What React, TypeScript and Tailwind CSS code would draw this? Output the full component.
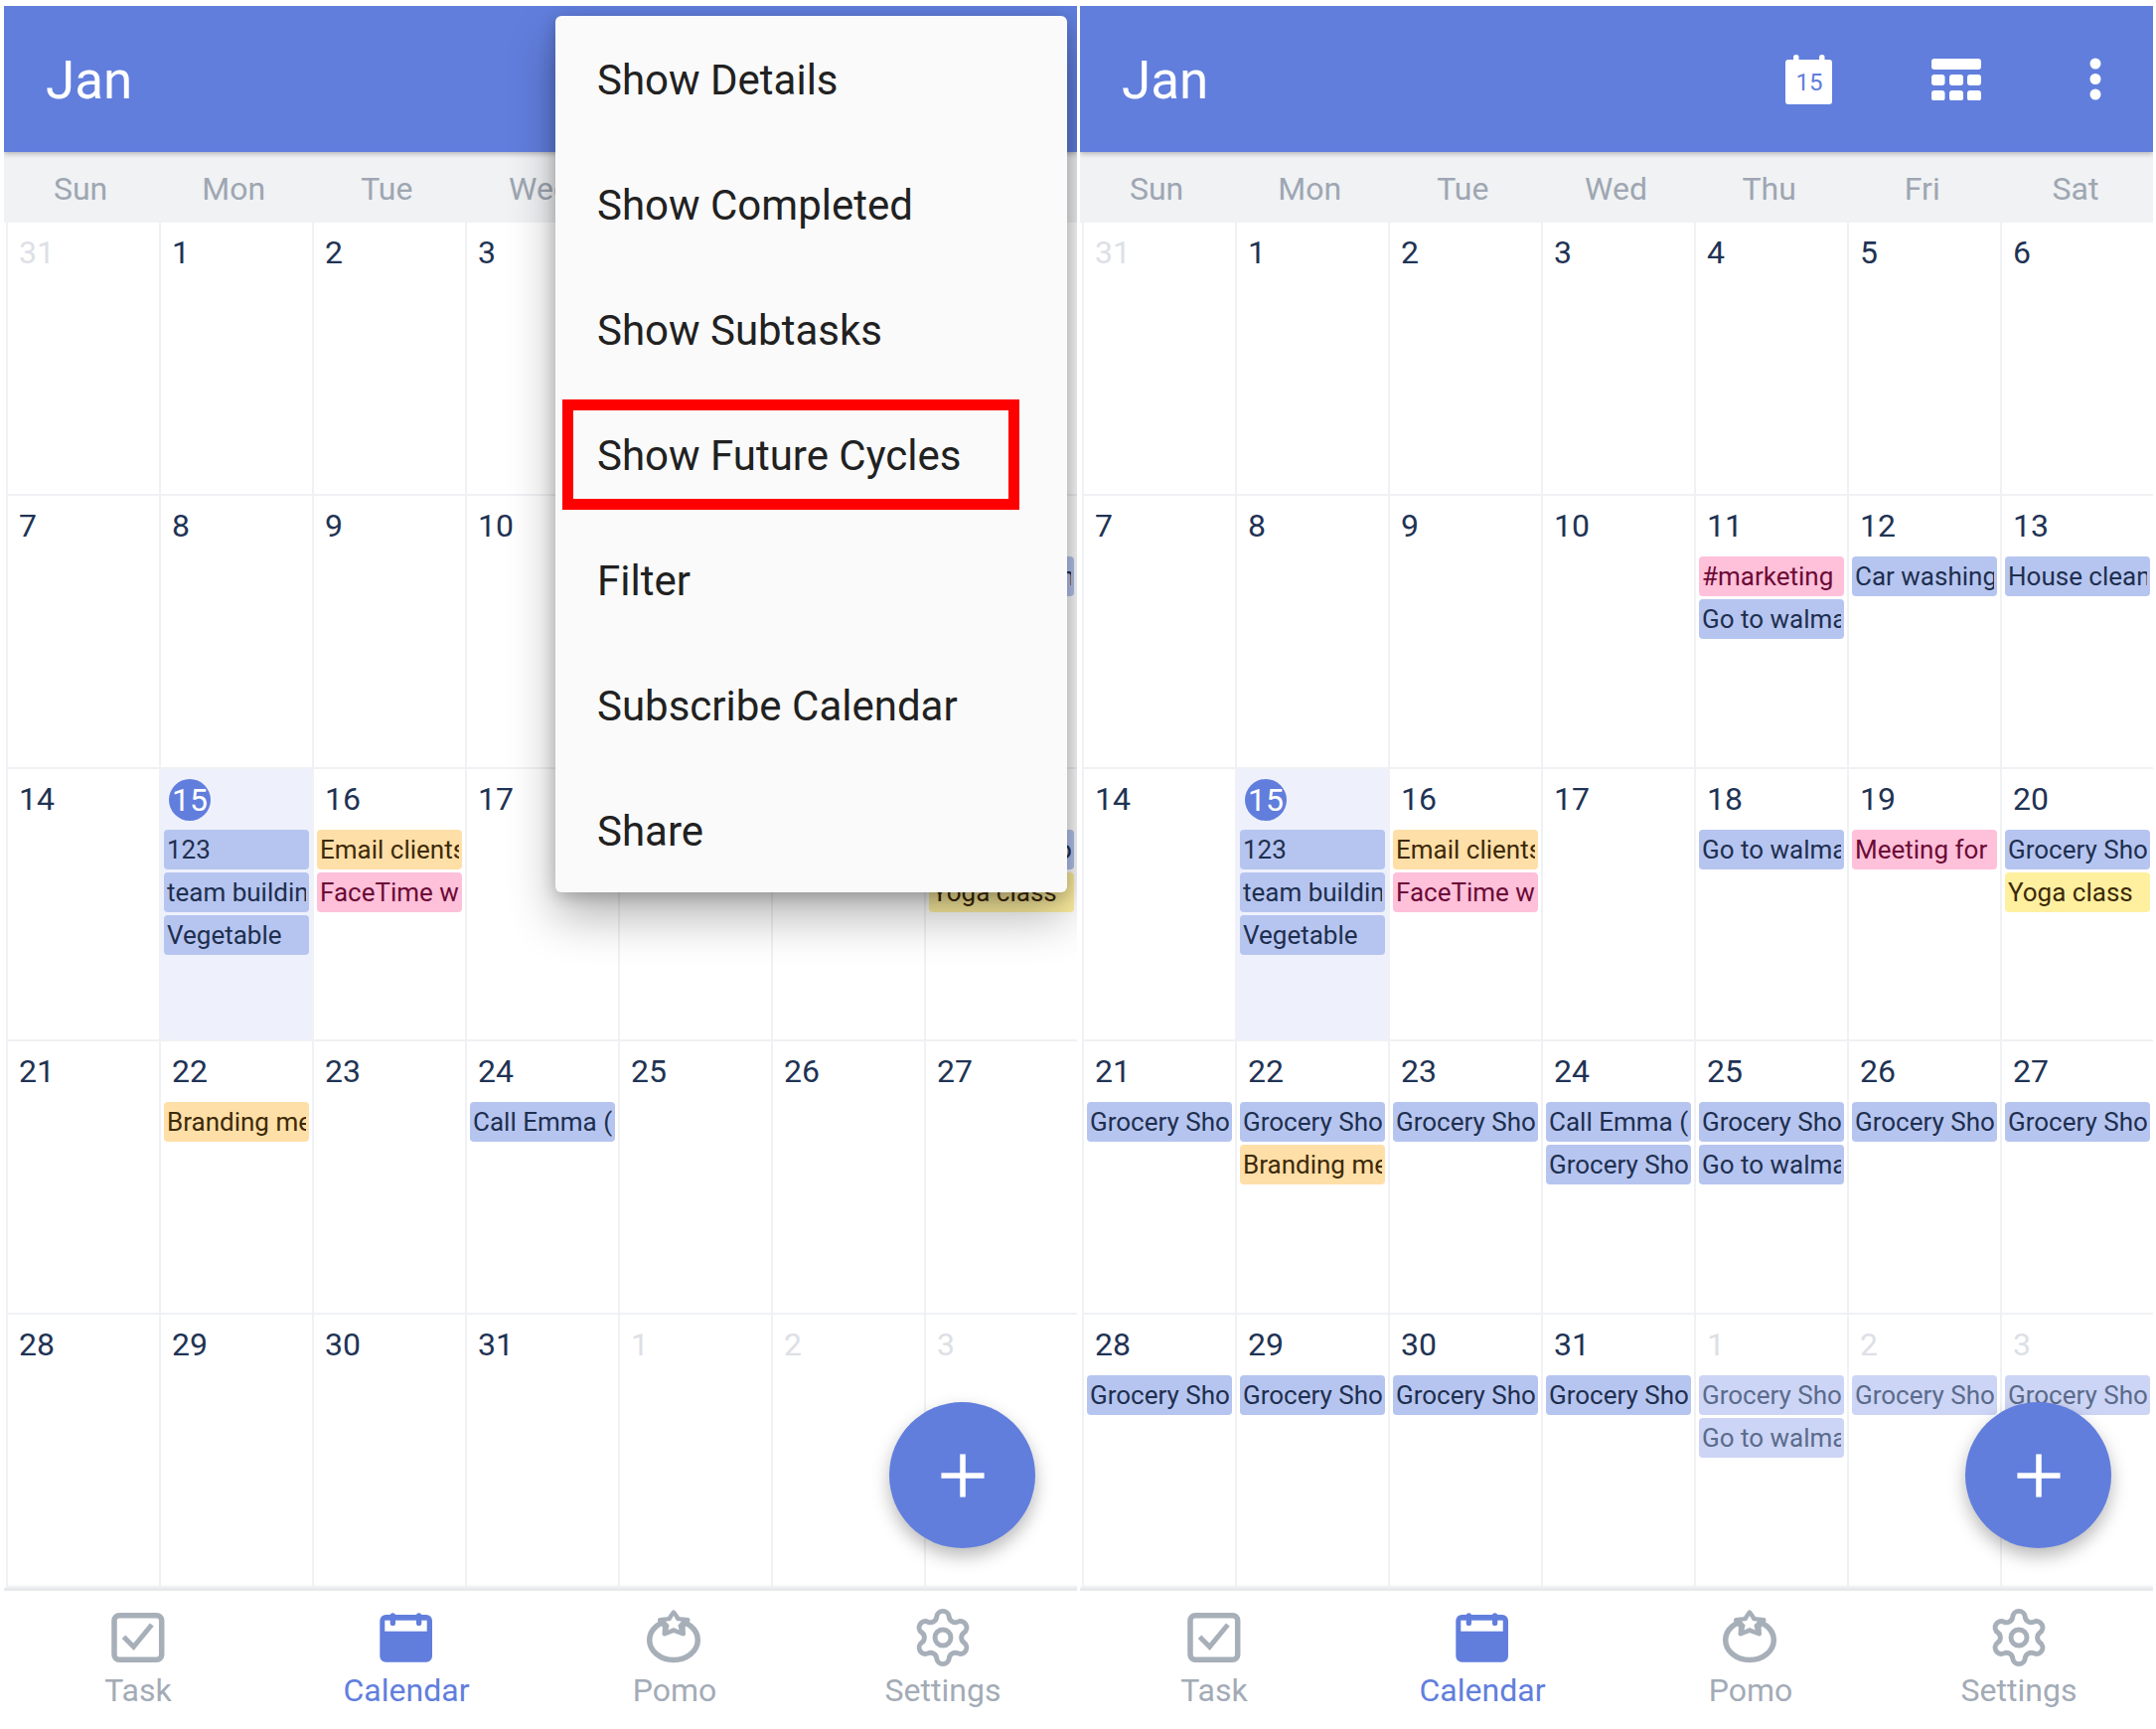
import { Plus, Settings } from "lucide-react";
import { clsx } from "clsx";

type Tone = "blue" | "orange" | "pink" | "yellow";
type CalEvent = { title: string; tone: Tone };
type EventMap = Record<string, CalEvent[]>;

const WEEKDAYS = ["Sun", "Mon", "Tue", "Wed", "Thu", "Fri", "Sat"];
const MENU_ITEMS = [
  "Show Details",
  "Show Completed",
  "Show Subtasks",
  "Show Future Cycles",
  "Filter",
  "Subscribe Calendar",
  "Share",
];

// key is "month-day", the grid starts on Dec 31 and ends on Feb 3
const CELLS: { key: string; day: number; muted: boolean }[] = [
  { key: "dec-31", day: 31, muted: true },
  ...Array.from({ length: 31 }, (_, i) => ({ key: `jan-${i + 1}`, day: i + 1, muted: false })),
  ...[1, 2, 3].map((d) => ({ key: `feb-${d}`, day: d, muted: true })),
];

const TONES: Record<Tone, string> = {
  blue: "bg-[#b6c5f0] text-[#1e2f4f]",
  orange: "bg-[#ffdfa8] text-[#3d2a08]",
  pink: "bg-[#ffc0da] text-[#6b0a35]",
  yellow: "bg-[#fff0a0] text-[#3d2a08]",
};

const grocery: CalEvent = { title: "Grocery Shopping", tone: "blue" };
const walmart: CalEvent = { title: "Go to walmart", tone: "blue" };
const branding: CalEvent = { title: "Branding meeting", tone: "orange" };
const callEmma: CalEvent = { title: "Call Emma (Work)", tone: "blue" };
const yoga: CalEvent = { title: "Yoga class", tone: "yellow" };

const sharedEvents: EventMap = {
  "jan-15": [
    { title: "123", tone: "blue" },
    { title: "team building", tone: "blue" },
    { title: "Vegetable", tone: "blue" },
  ],
  "jan-16": [
    { title: "Email clients", tone: "orange" },
    { title: "FaceTime with Mom", tone: "pink" },
  ],
};

const leftEvents: EventMap = {
  ...sharedEvents,
  "jan-13": [{ title: "House cleaning", tone: "blue" }],
  "jan-20": [grocery, yoga],
  "jan-22": [branding],
  "jan-24": [callEmma],
};

const rightEvents: EventMap = {
  ...sharedEvents,
  "jan-11": [{ title: "#marketing", tone: "pink" }, walmart],
  "jan-12": [{ title: "Car washing", tone: "blue" }],
  "jan-13": [{ title: "House cleaning", tone: "blue" }],
  "jan-18": [walmart],
  "jan-19": [{ title: "Meeting for lunch", tone: "pink" }],
  "jan-20": [grocery, yoga],
  "jan-21": [grocery],
  "jan-22": [grocery, branding],
  "jan-23": [grocery],
  "jan-24": [callEmma, grocery],
  "jan-25": [grocery, walmart],
  "jan-26": [grocery],
  "jan-27": [grocery],
  "jan-28": [grocery],
  "jan-29": [grocery],
  "jan-30": [grocery],
  "jan-31": [grocery],
  "feb-1": [grocery, walmart],
  "feb-2": [grocery],
  "feb-3": [grocery],
};

function TodayIcon() {
  return (
    <svg width="47" height="50" viewBox="0 0 47 50">
      <rect x="0" y="5" width="47" height="45" rx="3" fill="#fff" />
      <rect x="8" y="0" width="5.5" height="10" rx="2.5" fill="#fff" />
      <rect x="34" y="0" width="5.5" height="10" rx="2.5" fill="#fff" />
      <text x="24" y="36" textAnchor="middle" fontSize="24" fontFamily="Roboto, sans-serif" fill="#617edd">
        15
      </text>
    </svg>
  );
}

function MonthGridIcon() {
  return (
    <svg width="50" height="42" viewBox="0 0 50 42" fill="#fff">
      <rect x="0" y="0" width="50" height="11" rx="3" />
      <rect x="0" y="16" width="13.5" height="11" rx="3" />
      <rect x="18" y="16" width="14" height="11" rx="3" />
      <rect x="36" y="16" width="14" height="11" rx="3" />
      <rect x="0" y="32" width="13.5" height="10.5" rx="3" />
      <rect x="18" y="32" width="14" height="10.5" rx="3" />
      <rect x="36" y="32" width="14" height="10.5" rx="3" />
    </svg>
  );
}

function MoreIcon() {
  return (
    <svg width="12" height="44" viewBox="0 0 12 44" fill="#fff">
      <circle cx="6" cy="6" r="5.5" />
      <circle cx="6" cy="21.5" r="5.5" />
      <circle cx="6" cy="37" r="5.5" />
    </svg>
  );
}

function TaskIcon() {
  return (
    <svg width="60" height="60" viewBox="0 0 60 60" fill="none" stroke="#a7afb9">
      <rect x="6" y="7.8" width="47.7" height="44.4" rx="5" strokeWidth="5.5" />
      <path d="M15.5 29.3 L25.5 39.3 L43.8 17" strokeWidth="5" />
    </svg>
  );
}

function CalendarIcon() {
  return (
    <svg width="60" height="60" viewBox="0 0 60 60">
      <rect x="3.3" y="7" width="52.7" height="47.7" rx="6" fill="#617edd" />
      <rect x="8.3" y="12.7" width="42.4" height="11" fill="#fff" />
      <rect x="13.7" y="5.3" width="5.3" height="12.7" rx="2.6" fill="#617edd" />
      <rect x="40" y="5.3" width="5.3" height="12.7" rx="2.6" fill="#617edd" />
    </svg>
  );
}

function PomoIcon() {
  return (
    <svg width="60" height="60" viewBox="0 0 60 60" fill="none" stroke="#a7afb9" strokeLinejoin="round">
      <ellipse cx="29" cy="32.5" rx="24.3" ry="20" strokeWidth="5.5" />
      <path
        d="M29 5 L33.5 11.5 L43 12.5 L38 19 L38.5 26 L29 22.5 L20 26 L20.5 19 L15.5 12.5 L24.5 11.5 Z"
        fill="#a7afb9"
        strokeWidth="5"
      />
      <path
        d="M29 8 L32 13 L37 13.7 L33.4 17.6 L34.6 22.6 L29 20 L23.4 22.6 L24.6 17.6 L21 13.7 L26 13 Z"
        fill="#fff"
        stroke="none"
      />
    </svg>
  );
}

function BottomNav() {
  const items = [
    { label: "Task", icon: <TaskIcon /> },
    { label: "Calendar", icon: <CalendarIcon />, active: true },
    { label: "Pomo", icon: <PomoIcon /> },
    { label: "Settings", icon: <Settings size={64} strokeWidth={1.85} color="#a7afb9" className="-my-[2px]" /> },
  ];

  return (
    <nav className="flex h-[142px] border-t-[3px] border-[#e8e9eb] bg-white shadow-[0_-2px_4px_rgba(0,0,0,0.04)]">
      {items.map((item) => (
        <div key={item.label} className="flex flex-1 flex-col items-center pt-[17px]">
          <div className="flex h-[60px] items-center justify-center">{item.icon}</div>
          <span
            className={clsx(
              "mt-[4px] text-[32px] leading-[38px]",
              item.active ? "text-[#617edd]" : "text-[#a3abb6]"
            )}
          >
            {item.label}
          </span>
        </div>
      ))}
    </nav>
  );
}

function EventChip({ event, muted }: { event: CalEvent; muted: boolean }) {
  return (
    <div
      className={clsx(
        "mb-[3px] h-[40px] rounded-[4px] px-[3px] text-[26px] leading-[40px]",
        muted ? "bg-[#ccd5f5] text-[#5b6b8c]" : TONES[event.tone]
      )}
    >
      <div className="overflow-hidden whitespace-nowrap">{event.title}</div>
    </div>
  );
}

function DayCell({
  day,
  muted,
  today,
  events,
}: {
  day: number;
  muted: boolean;
  today: boolean;
  events: CalEvent[];
}) {
  return (
    <div
      className={clsx(
        "border-b-2 border-l-2 border-[#f0f1f4] bg-clip-padding px-[3px]",
        today && "bg-[#eef1fc]"
      )}
    >
      <div className="flex h-[61px] items-center pb-[1px] text-[32px]">
        {today ? (
          <span className="ml-[5px] mt-[3px] flex h-[42px] w-[42px] items-center justify-center rounded-full bg-[#617edd] text-white">
            {day}
          </span>
        ) : (
          <span className={clsx("ml-[8px]", muted ? "text-[#dde0e6]" : "text-[#1f3354]")}>{day}</span>
        )}
      </div>
      {events.map((event) => (
        <EventChip key={event.title} event={event} muted={muted} />
      ))}
    </div>
  );
}

function Phone({ events, showMenu }: { events: EventMap; showMenu?: boolean }) {
  return (
    <div className="relative h-[1734px] w-[1080px] overflow-hidden bg-white">
      <header className="relative z-10 flex h-[147px] items-center bg-[#617edd] pl-[42px] pr-[52px] text-white shadow-[0_2px_5px_rgba(0,0,0,0.25)]">
        <h1 className="flex-1 pt-[4px] text-[53px] font-normal">Jan</h1>
        <div className="flex items-center">
          <TodayIcon />
          <div className="ml-[100px]">
            <MonthGridIcon />
          </div>
          <div className="ml-[109px]">
            <MoreIcon />
          </div>
        </div>
      </header>

      <div className="grid h-[71px] grid-cols-7 items-center bg-[#f0f2f4] pr-[1px] pt-[2px] text-center text-[32px] text-[#9ea6b2]">
        {WEEKDAYS.map((name) => (
          <span key={name}>{name}</span>
        ))}
      </div>

      <div className="grid h-[1374px] grid-cols-[repeat(7,154px)] grid-rows-5 pl-[2px]">
        {CELLS.map((cell) => (
          <DayCell
            key={cell.key}
            day={cell.day}
            muted={cell.muted}
            today={cell.key === "jan-15"}
            events={events[cell.key] ?? []}
          />
        ))}
      </div>

      <BottomNav />

      <button
        type="button"
        className="absolute bottom-[182px] right-[42px] z-10 flex h-[147px] w-[147px] items-center justify-center rounded-full bg-[#617edd] text-white shadow-[0_8px_18px_rgba(0,0,0,0.28)]"
      >
        <Plus size={74} strokeWidth={1.8} strokeLinecap="butt" />
      </button>

      {showMenu && (
        <>
          <div className="absolute left-[555px] top-[10px] z-20 w-[515px] rounded-[6px] bg-[#fafafa] shadow-[0_24px_48px_rgba(0,0,0,0.3),0_4px_16px_rgba(0,0,0,0.2)]">
            {MENU_ITEMS.map((item) => (
              <div key={item} className="flex h-[126px] items-center pl-[42px] pt-[3px] text-[42px] text-[#212121]">
                {item}
              </div>
            ))}
          </div>
          <div className="absolute left-[562px] top-[396px] z-30 h-[111px] w-[460px] border-[11px] border-[#ff0000]" />
        </>
      )}
    </div>
  );
}

export default function App() {
  return (
    <div className="flex h-[1740px] w-[2170px] gap-[3px] overflow-hidden bg-white pl-[4px] pt-[6px] font-[family-name:Roboto,sans-serif]">
      <Phone events={leftEvents} showMenu />
      <Phone events={rightEvents} />
    </div>
  );
}
